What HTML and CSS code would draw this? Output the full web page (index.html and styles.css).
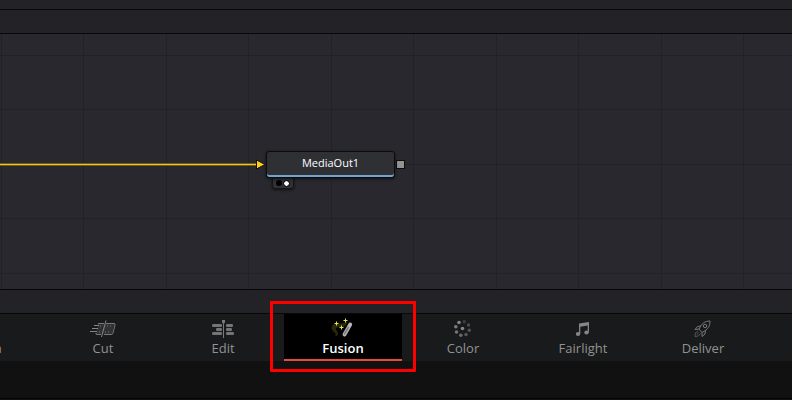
FILE: index.html
```
<!DOCTYPE html>
<html lang="en">
<head>
  <meta charset="UTF-8">
  <title>Fusion</title>
  <link rel="stylesheet" href="styles.css">
</head>
<body>
  <div class="top-strip"></div>
  <div class="toolbar"></div>

  <!-- Node editor -->
  <main class="canvas">
    <svg class="grid" width="792" height="255" shape-rendering="crispEdges">
      <path d="M1.5 0V255M83.5 0V255M166.5 0V255M248.5 0V255M331.5 0V255M413.5 0V255M496.5 0V255M578.5 0V255M661.5 0V255M743.5 0V255M0 21.5H792M0 75.5H792M0 130.5H792M0 184.5H792M0 239.5H792" stroke="#222226"/>
    </svg>
    <svg class="wire" width="268" height="13">
      <path d="M0 6.500H257" stroke="#6f5d1c" stroke-width="3"/>
      <path d="M0 6.500H257" stroke="#f2c51c"/>
      <path d="M256.500 2V11L265 6.500Z" fill="#ffcf1a" stroke="#111" stroke-width="1"/>
    </svg>
    <div class="node">MediaOut1</div>
    <div class="viewers"><i class="dot"></i><i class="dot on"></i></div>
    <div class="port"></div>
  </main>

  <div class="status"></div>

  <!-- Page tabs -->
  <nav class="pages">
    <div class="page"><svg width="28" height="20"></svg><span>Media</span></div>
    <div class="page">
      <svg width="28" height="20" viewBox="0 0 28 20" fill="none" stroke="#77787a">
        <path d="M9.500 5H25.500L23 15H7Z" fill="#303133" stroke="none"/>
        <path d="M9 4.500H15M17 4.500H25Q26.500 4.500 26 6L24 14Q23.700 15.500 22 15.500H15M12 15.500H8Q6.500 15.500 7 14"/>
        <path d="M5 6.500H10M3 9.500H9M1 12.500H8" stroke="#858688"/>
        <path d="M17 1.500L12.500 18" stroke="#858688"/>
        <path d="M11 7H14M18 7H24M10 13H12M16 13H22" stroke-dasharray="1 2" stroke="#77787a"/>
      </svg>
      <span>Cut</span>
    </div>
    <div class="page">
      <svg width="28" height="20" viewBox="0 0 28 20" fill="#747577">
        <rect x="3" y="5" width="10" height="3" rx="1.200"/>
        <rect x="7" y="9" width="6" height="3" rx="1.200"/>
        <rect x="3" y="13" width="10" height="3" rx="1.200"/>
        <rect x="17" y="5" width="7" height="3" rx="1.200"/>
        <rect x="17" y="9" width="6" height="3" rx="1.200"/>
        <rect x="17" y="13" width="8" height="3" rx="1.200"/>
        <path d="M13 1H16V3.500L15 4.500V19H14V4.500L13 3.500Z" fill="#77787a"/>
      </svg>
      <span>Edit</span>
    </div>
    <div class="page active">
      <svg width="28" height="20" viewBox="0 0 28 20">
        <path d="M6 17C8 15 6 14 4 12C1 8 3 5 8 4.500C13 4.500 14 4 18 2.500C18 7 15 8.500 11 8C7 8 6 10 8 12C10 15 9 17 6 17Z" fill="#282808"/>
        <path d="M21.200 5.500L15.500 15.500" stroke="#b8b8b8" stroke-width="3.800" stroke-linecap="round"/>
        <path d="M19.500 8L15.200 15.500" stroke="#7b7d7f" stroke-width="1.600"/>
        <path d="M7.500 2.500V6.500M5.500 4.500H9.500M16.500 -.5V3.500M14.500 1.500H18.500M12.500 6.500V10.500M10.500 8.500H14.500" stroke="#e6e640"/>
      </svg>
      <span>Fusion</span>
    </div>
    <div class="page">
      <svg width="28" height="20" viewBox="0 0 28 20">
        <circle cx="10" cy="3.500" r="1.800" fill="#858688"/>
        <circle cx="15.300" cy="2.700" r="1.700" fill="#3d3e40"/>
        <circle cx="19.500" cy="6" r="1.700" fill="#4a4b4d"/>
        <circle cx="20.300" cy="11.300" r="1.700" fill="#515254"/>
        <circle cx="17" cy="15.500" r="1.700" fill="#58595b"/>
        <circle cx="11.800" cy="16.300" r="1.800" fill="#68696b"/>
        <circle cx="7.500" cy="13" r="1.800" fill="#737476"/>
        <circle cx="6.800" cy="7.700" r="1.800" fill="#7b7c7e"/>
        <circle cx="13.500" cy="9.500" r="1.800" fill="#858688"/>
      </svg>
      <span>Color</span>
    </div>
    <div class="page">
      <svg width="28" height="20" viewBox="0 0 28 20" fill="#858688">
        <ellipse cx="9" cy="15" rx="2.200" ry="1.900"/>
        <ellipse cx="17.500" cy="13.500" rx="2.200" ry="1.900"/>
        <path d="M10 4.500L20 3V13.500H18.700V6.500L11.300 7.700V15H10Z"/>
      </svg>
      <span>Fairlight</span>
    </div>
    <div class="page">
      <svg width="28" height="20" viewBox="0 0 28 20" fill="none" stroke="#77787a" stroke-linejoin="round">
        <path d="M21 2C16 2 13 4 10 10L13 13.500C19 10.500 21 7 21 2Z"/>
        <path d="M12 7L8.500 7.500L6 10.500L10 10M16.500 11L16 15L13 17.500L13 13.500"/>
        <circle cx="16" cy="7" r="1.700"/>
        <path d="M9 12C7 12.500 6 15 6 17.500C9 17.500 11 16 11.500 14.500M8 15.500L10 13.500" stroke="#58595b"/>
      </svg>
      <span>Deliver</span>
    </div>
  </nav>

  <footer class="footer"></footer>

  <div class="highlight"></div>
</body>
</html>
```

FILE: styles.css
```
* {
  box-sizing: border-box;
}
body {
  margin: 0;
  width: 792px;
  height: 400px;
  overflow: hidden;
  position: relative;
  background: #111;
  font-family: "Open Sans", sans-serif;
}
.top-strip {
  height: 10px;
  background: #232327;
  border-bottom: 1px solid #08080a;
}
.toolbar {
  height: 24px;
  background: #232327;
  border-bottom: 1px solid #08080a;
}
.canvas {
  position: relative;
  height: 255px;
  background: #29282e;
}
.grid {
  display: block;
}
.wire {
  position: absolute;
  left: 0;
  top: 124px;
}
.node {
  position: absolute;
  left: 266px;
  top: 117px;
  width: 129px;
  height: 27px;
  border: 1px solid #0c0c0d;
  border-radius: 3px;
  background: #2f3034;
  box-shadow: inset 0 -2px #75a5d2, 0 1px 3px #111;
  color: #fff;
  font-size: 11px;
  line-height: 21px;
  text-align: center;
  z-index: 1;
}
.viewers {
  position: absolute;
  left: 272px;
  top: 142px;
  width: 22px;
  height: 13px;
  padding: 3px 3px 0 3px;
  display: flex;
  justify-content: space-between;
  background: #303135;
  border: 1px solid #151517;
  border-radius: 3px;
  box-shadow: 0 1px 3px #111;
}
.dot {
  width: 6px;
  height: 6px;
  border-radius: 50%;
  background: #000;
}
.dot.on {
  background: #fff;
  border: 1px solid #111;
  background-clip: padding-box;
  outline: 0;
  width: 7px;
  height: 7px;
}
.port {
  position: absolute;
  left: 396px;
  top: 126px;
  width: 9px;
  height: 9px;
  background: #929292;
  border: 1px solid #0c0c0d;
}
.status {
  height: 25px;
  background: #232327;
  border-top: 1px solid #08080a;
  border-bottom: 1px solid #08080a;
}
.pages {
  display: flex;
  height: 47px;
  margin-left: -77px;
  width: 869px;
  background: #181a1b;
}
.page {
  flex: none;
  width: 118px;
  margin: 0 1px;
  padding-top: 5px;
  display: flex;
  flex-direction: column;
  align-items: center;
  color: #929292;
  font-size: 13px;
  line-height: 18px;
}
.page svg {
  overflow: visible;
}
.page.active {
  background: #000;
  border-bottom: 2px solid #e64b3d;
  color: #fff;
  font-weight: 600;
}
.footer {
  height: 38px;
  background: #111;
  border-bottom: 1px solid #050505;
}
.highlight {
  position: absolute;
  left: 270px;
  top: 301px;
  width: 146px;
  height: 71px;
  border: 3px solid #f00;
  border-radius: 1px;
}
```
